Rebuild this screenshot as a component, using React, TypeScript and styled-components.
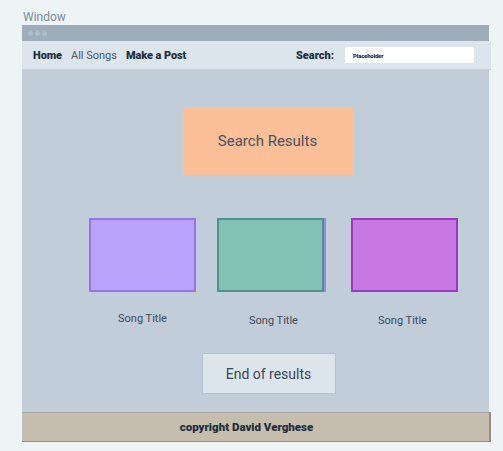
import React from "react";
import styled, { createGlobalStyle } from "styled-components";

const Global = createGlobalStyle`
  html, body { margin: 0; padding: 0; background: #eef3f6; }
  body { font-family: Roboto, "Liberation Sans", sans-serif; width: 503px; height: 451px; overflow: hidden; }
`;

const Page = styled.div`
  padding: 10px 0 0 22px;
  display: flex;
  flex-direction: column;
`;

const Label = styled.div`
  font-size: 12px;
  line-height: 15px;
  color: #7a8b99;
  padding-left: 1px;
`;

const Frame = styled.div`
  width: 469px;
  display: flex;
  flex-direction: column;
`;

const TitleBar = styled.div`
  height: 16px;
  width: 467px;
  background: #9dadba;
  display: flex;
  align-items: center;
  gap: 2px;
  padding-left: 6px;
  box-sizing: border-box;
`;

const Dot = styled.span`
  width: 5px;
  height: 5px;
  border-radius: 50%;
  background: #afbdc8;
`;

const Nav = styled.div`
  height: 29px;
  background: #dde5ec;
  border-bottom: 1px solid #c9d3dc;
  box-sizing: border-box;
  display: flex;
  align-items: center;
  padding: 0 17px 0 11px;
  font-size: 11px;
  color: #1f2f3e;
`;

const NavLink = styled.span<{ $bold?: boolean }>`
  font-weight: ${(p) => (p.$bold ? 900 : 400)};
  letter-spacing: ${(p) => (p.$bold ? "-0.1px" : "0")};
  color: ${(p) => (p.$bold ? "#1f2f3e" : "#4a5866")};
  margin-right: 9px;
`;

const Spacer = styled.div`
  flex: 1;
`;

const SearchLabel = styled.span`
  font-weight: 900;
  letter-spacing: 0;
  margin-right: 11px;
`;

const Input = styled.div`
  width: 129px;
  height: 16px;
  background: #ffffff;
  display: flex;
  align-items: center;
  padding-left: 8px;
  box-sizing: border-box;
  font-size: 6px;
  font-weight: 900;
  color: #1f2f3e;
  letter-spacing: -0.2px;
`;

const Content = styled.div`
  width: 467px;
  height: 342px;
  background: #c1ceda;
  display: flex;
  flex-direction: column;
  align-items: center;
  box-sizing: border-box;
  padding-top: 37px;
`;

const ResultsBox = styled.div`
  margin-left: 24px;
  width: 170px;
  height: 68px;
  background: #fcbf98;
  display: flex;
  align-items: center;
  justify-content: center;
  font-size: 15px;
  color: #47525e;
`;

const Cards = styled.div`
  align-self: stretch;
  display: flex;
  padding-left: 67px;
  margin-top: 43px;
`;

const Card = styled.div<{ $ml: number; $dy: number }>`
  display: flex;
  flex-direction: column;
  align-items: center;
  margin-left: ${(p) => p.$ml}px;
  width: 107px;
  gap: ${(p) => 20 + p.$dy}px;
`;

const Thumb = styled.div<{ $fill: string; $border: string; $edge?: string }>`
  width: 107px;
  height: 74px;
  box-sizing: border-box;
  background: ${(p) => p.$fill};
  border: 2px solid ${(p) => p.$border};
  box-shadow: ${(p) => (p.$edge ? `2px 0 0 ${p.$edge}` : "none")};
`;

const SongTitle = styled.div<{ $dx: number }>`
  font-size: 11px;
  color: #3e4a56;
  line-height: 13px;
  margin-left: ${(p) => p.$dx * 2}px;
`;

const EndButton = styled.div`
  margin-top: 26px;
  margin-left: 26px;
  width: 134px;
  height: 41px;
  box-sizing: border-box;
  background: #dde5ec;
  border: 1px solid #b5c3cf;
  display: flex;
  align-items: center;
  justify-content: center;
  font-size: 14px;
  color: #3a4653;
`;

const Footer = styled.div`
  height: 30px;
  background: #c5bdad;
  border-top: 1px solid #a9a89e;
  border-right: 2px solid #9b8d70;
  border-bottom: 1px solid #9b8d70;
  box-sizing: border-box;
  display: flex;
  align-items: center;
  justify-content: center;
  padding-right: 18px;
  font-size: 11.5px;
  font-weight: 900;
  letter-spacing: 0;
  color: #1f2f3e;
`;

export default function App() {
  return (
    <>
      <Global />
      <Page>
        <Label>Window</Label>
        <Frame>
          <TitleBar>
            <Dot />
            <Dot />
            <Dot />
          </TitleBar>
          <Nav>
            <NavLink $bold>Home</NavLink>
            <NavLink>All Songs</NavLink>
            <NavLink $bold>Make a Post</NavLink>
            <Spacer />
            <SearchLabel>Search:</SearchLabel>
            <Input>Placeholder</Input>
          </Nav>
          <Content>
            <ResultsBox>Search Results</ResultsBox>
            <Cards>
              <Card $ml={0} $dy={0}>
                <Thumb $fill="#b8a3fd" $border="#9a70f5" />
                <SongTitle $dx={0}>Song Title</SongTitle>
              </Card>
              <Card $ml={21} $dy={2}>
                <Thumb $fill="#82c2b5" $border="#4f918b" $edge="#9a82f0" />
                <SongTitle $dx={3}>Song Title</SongTitle>
              </Card>
              <Card $ml={27} $dy={2}>
                <Thumb $fill="#c878e3" $border="#9b37c9" />
                <SongTitle $dx={-2}>Song Title</SongTitle>
              </Card>
            </Cards>
            <EndButton>End of results</EndButton>
          </Content>
          <Footer>copyright David Verghese</Footer>
        </Frame>
      </Page>
    </>
  );
}
